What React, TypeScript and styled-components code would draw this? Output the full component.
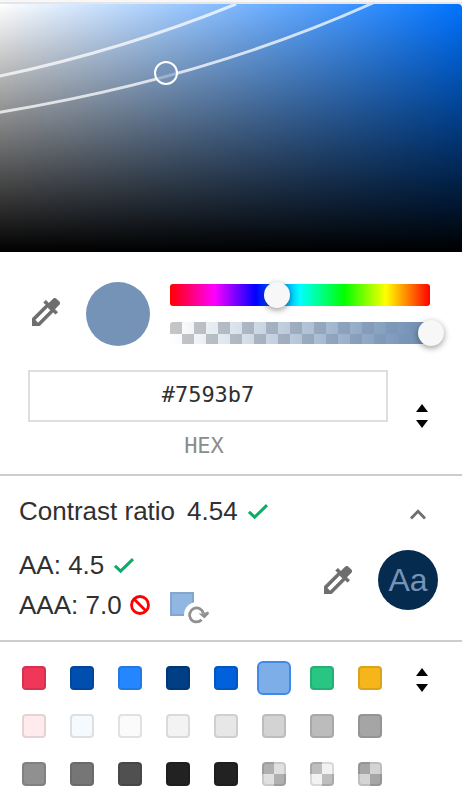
import React, { useState } from "react";
import styled, { createGlobalStyle, css } from "styled-components";

const GlobalStyle = createGlobalStyle`
  *, *::before, *::after { box-sizing: border-box; }
  body { margin: 0; background: #fff; }
  button, input { font: inherit; color: inherit; margin: 0; padding: 0; }
`;

const checker = (a: string, b: string, size: number) =>
  css`repeating-conic-gradient(${a} 0% 25%, ${b} 0% 50%) 0 0 / ${size}px ${size}px`;

const Picker = styled.main`
  border-top: 2px solid #f7f7f7;
  background: #fff;
  color: #303030;
  font-family: "Liberation Sans", Arial, sans-serif;
  font-size: 26px;
  line-height: 40px;
`;

const Spectrum = styled.section`
  position: relative;
  height: 250px;
  border-top: 2px solid #e6e6e6;
  background: #fff;
`;

const SpectrumFill = styled.div`
  height: 100%;
  border-radius: 4px 4px 0 0;
  overflow: hidden;
  background:
    linear-gradient(to top, #000, transparent),
    linear-gradient(to right, #fff, transparent),
    #0073ff;
`;

const Curves = styled.svg`
  display: block;
  width: 100%;
  height: 100%;
`;

const SpectrumHandle = styled.button`
  position: absolute;
  left: 36%;
  top: 28%;
  width: 24px;
  height: 24px;
  transform: translate(-50%, -50%);
  border: 2px solid #fff;
  border-radius: 50%;
  background: rgba(117, 147, 183, 0.6);
`;

const Controls = styled.section`
  display: grid;
  grid-template-columns: 30px 64px 1fr;
  align-items: center;
  column-gap: 26px;
  padding: 30px 32px 0 30px;
`;

const IconButton = styled.button`
  display: inline-flex;
  align-items: center;
  justify-content: center;
  border: 0;
  background: none;
  color: #6e6e6e;
`;

const PickButton = styled(IconButton)`
  justify-content: flex-end;
  padding-bottom: 4px;
`;

const ColorDisc = styled.div`
  width: 64px;
  height: 64px;
  border-radius: 50%;
  background: #7593b7;
`;

const Sliders = styled.div`
  display: flex;
  flex-direction: column;
  gap: 16px;
  margin-left: -6px;
`;

const Track = styled.div<{ $kind: "hue" | "alpha" }>`
  display: flex;
  height: 22px;
  border-radius: 3px;
  background: ${(p) =>
    p.$kind === "hue"
      ? "linear-gradient(to right, #f00, #f0f 17%, #00f 33%, #0ff 50%, #0f0 67%, #ff0 83%, #f00)"
      : css`linear-gradient(to right, transparent, #7593b7 94%), ${checker("#fff", "#c6c6c6", 24)}`};
`;

const Range = styled.input`
  appearance: none;
  flex: 1;
  min-width: 0;
  height: 22px;
  margin: 0 -14px 0 -13px;
  background: transparent;
  &::-webkit-slider-thumb {
    appearance: none;
    width: 26px;
    height: 26px;
    border-radius: 50%;
    background: #f7f7f7;
    box-shadow: 0 2px 6px rgba(0, 0, 0, 0.4);
  }
`;

const ValueRow = styled.section`
  display: grid;
  grid-template-columns: 1fr 24px;
  align-items: center;
  column-gap: 22px;
  padding: 24px 28px 8px;
  font-family: "DejaVu Sans Mono", monospace;
  font-size: 22px;
`;

const HexField = styled.label`
  display: flex;
  flex-direction: column;
  gap: 4px;
  color: #8c8c8c;
  text-align: center;
`;

const HexCaption = styled.span`
  padding-right: 8px;
`;

const HexInput = styled.input`
  width: 100%;
  height: 52px;
  padding-bottom: 4px;
  border: 2px solid #dedede;
  background: #fff;
  color: #303030;
  text-align: center;
`;

const FormatButton = styled(IconButton)`
  padding-bottom: 4px;
`;

const Contrast = styled.section`
  border-top: 2px solid #cdcdcd;
  border-bottom: 2px solid #cdcdcd;
  padding: 15px 24px 15px 19px;
`;

const Row = styled.div<{ $gap?: number }>`
  display: flex;
  align-items: center;
  gap: ${(p) => p.$gap ?? 10}px;
`;

const Summary = styled(Row)`
  justify-content: space-between;
  margin-bottom: 14px;
`;

const Details = styled.div`
  display: flex;
  align-items: flex-start;
  justify-content: space-between;
`;

const Tools = styled(Row)`
  padding-top: 5px;
`;

const Toggle = styled(IconButton)`
  width: 40px;
  height: 40px;
  padding-top: 6px;
`;

const Preview = styled.div`
  display: flex;
  align-items: center;
  justify-content: center;
  width: 60px;
  height: 60px;
  border-radius: 50%;
  background: #052b4e;
  color: #7593b7;
  font-size: 32px;
`;

const Suggestion = styled(IconButton)`
  margin-left: 12px;
`;

const Palette = styled.section`
  display: grid;
  grid-template-columns: 1fr 24px;
  align-items: start;
  column-gap: 16px;
  padding: 12px 28px 0 10px;
`;

const Swatches = styled.div`
  display: grid;
  grid-template-columns: repeat(8, 1fr);
`;

const SwatchCell = styled.div`
  display: flex;
  align-items: center;
  justify-content: center;
  height: 48px;
`;

const StepperCell = styled(SwatchCell)`
  height: 52px;
`;

const Swatch = styled.button<{ $color: string; $alpha?: boolean; $selected?: boolean }>`
  width: ${(p) => (p.$selected ? 34 : 24)}px;
  height: ${(p) => (p.$selected ? 34 : 24)}px;
  border: ${(p) => (p.$selected ? "2px solid #3f88ec" : "2px solid rgba(0, 0, 0, 0.1)")};
  border-radius: ${(p) => (p.$selected ? 6 : 4)}px;
  background: ${(p) =>
    p.$alpha
      ? css`linear-gradient(${p.$color}, ${p.$color}), repeating-conic-gradient(#fff 0% 25%, #c8c8c8 0% 50%) border-box`
      : p.$color};
`;

const Eyedropper = () => (
  <svg width="28" height="28" viewBox="3 3 18 18" aria-hidden="true">
    <path
      fill="currentColor"
      stroke="currentColor"
      strokeWidth="0.4"
      d="M20.71 5.63l-2.34-2.34c-.39-.39-1.02-.39-1.41 0l-3.12 3.12-1.93-1.91-1.41 1.41 1.42 1.42L3 16.25V21h4.75l8.92-8.92 1.42 1.42 1.41-1.41-1.92-1.92 3.12-3.12c.4-.4.4-1.03.01-1.42zM6.92 19L5 17.08l8.06-8.06 1.92 1.92L6.92 19z"
    />
  </svg>
);

const Check = () => (
  <svg width="20" height="18" viewBox="0 0 20 18" role="img" aria-label="Passes">
    <path d="M1 9.8 6.6 15.2 19 3.2" fill="none" stroke="#0cab69" strokeWidth="3" />
  </svg>
);

const Prohibited = () => (
  <svg width="20" height="20" viewBox="0 0 20 20" role="img" aria-label="Fails">
    <g fill="none" stroke="#f00" strokeWidth="2.8">
      <circle cx="10" cy="10" r="8.5" />
      <path d="M4 4 16 16" />
    </g>
  </svg>
);

const Refresh = () => (
  <svg width="40" height="38" viewBox="0 0 40 38" aria-hidden="true">
    <rect x="1" y="7" width="22" height="22" fill="#92b6e2" stroke="#84a5ce" strokeWidth="2" />
    <circle cx="27" cy="29" r="13" fill="#fff" />
    <path d="M31.6 33.8A7 7 0 1 1 33.4 27.5" fill="none" stroke="#909090" strokeWidth="2.8" />
    <path d="M28.6 27.6H33L38 25.4 39.2 27.4 34.4 32.6Z" fill="#909090" />
  </svg>
);

const ChevronUp = () => (
  <svg width="16" height="11" viewBox="0 0 16 11" aria-hidden="true">
    <path d="M1 9.5 8 2.3 15 9.5" fill="none" stroke="#6e6e6e" strokeWidth="2.8" />
  </svg>
);

const Arrows = () => (
  <svg width="12" height="24" viewBox="0 0 12 24" aria-hidden="true">
    <path d="M6 0 12 8H0ZM0 16H12L6 24Z" fill="#000" />
  </svg>
);

type SwatchItem = { color: string; alpha?: boolean };

const swatches: SwatchItem[] = [
  { color: "#ef3859" }, { color: "#004fae" }, { color: "#2587ff" }, { color: "#003e86" },
  { color: "#0061da" }, { color: "#7eaee8" }, { color: "#29c683" }, { color: "#f5b51b" },
  { color: "#ffebed" }, { color: "#f5faff" }, { color: "#fbfbfb" }, { color: "#f3f3f3" },
  { color: "#e7e7e7" }, { color: "#d3d3d3" }, { color: "#bcbcbc" }, { color: "#a5a5a5" },
  { color: "#909090" }, { color: "#767676" }, { color: "#505050" }, { color: "#222222" },
  { color: "#222222" },
  { color: "rgba(0, 0, 0, 0.12)", alpha: true },
  { color: "rgba(0, 0, 0, 0.05)", alpha: true },
  { color: "rgba(0, 0, 0, 0.17)", alpha: true },
];

export default function App() {
  const [hex, setHex] = useState("#7593b7");
  const [selected, setSelected] = useState(5);

  return (
    <>
      <GlobalStyle />
      <Picker>
        <Spectrum>
          <SpectrumFill>
            <Curves viewBox="0 0 462 248" preserveAspectRatio="none" aria-hidden="true">
              <g fill="none" stroke="#fff" strokeOpacity="0.75" strokeWidth="3">
                <path d="M-2 72.500C80 55 160 31 236 0" />
                <path d="M-2 108.500C130 87 255 52 373 -1" />
              </g>
            </Curves>
          </SpectrumFill>
          <SpectrumHandle aria-label="Saturation and brightness" />
        </Spectrum>

        <Controls>
          <PickButton aria-label="Pick color">
            <Eyedropper />
          </PickButton>
          <ColorDisc />
          <Sliders>
            <Track $kind="hue">
              <Range type="range" aria-label="Hue" min={0} max={100} defaultValue={41} />
            </Track>
            <Track $kind="alpha">
              <Range type="range" aria-label="Alpha" min={0} max={100} defaultValue={100} />
            </Track>
          </Sliders>
        </Controls>

        <ValueRow>
          <HexField>
            <HexInput value={hex} onChange={(e) => setHex(e.target.value)} />
            <HexCaption>HEX</HexCaption>
          </HexField>
          <FormatButton aria-label="Change color format">
            <Arrows />
          </FormatButton>
        </ValueRow>

        <Contrast>
          <Summary>
            <Row>
              <Row $gap={12}>
                <span>Contrast ratio</span>
                <span>4.54</span>
              </Row>
              <Check />
            </Row>
            <Toggle aria-label="Collapse contrast details">
              <ChevronUp />
            </Toggle>
          </Summary>
          <Details>
            <div>
              <Row>
                <span>AA: 4.5</span>
                <Check />
              </Row>
              <Row $gap={8}>
                <span>AAA: 7.0</span>
                <Prohibited />
                <Suggestion aria-label="Use suggested color">
                  <Refresh />
                </Suggestion>
              </Row>
            </div>
            <Tools $gap={26}>
              <IconButton aria-label="Pick background color">
                <Eyedropper />
              </IconButton>
              <Preview>Aa</Preview>
            </Tools>
          </Details>
        </Contrast>

        <Palette>
          <Swatches>
            {swatches.map((s, i) => (
              <SwatchCell key={i}>
                <Swatch
                  $color={s.color}
                  $alpha={s.alpha}
                  $selected={selected === i}
                  aria-label={`Swatch ${i + 1}`}
                  onClick={() => setSelected(i)}
                />
              </SwatchCell>
            ))}
          </Swatches>
          <StepperCell>
            <IconButton aria-label="Change palette">
              <Arrows />
            </IconButton>
          </StepperCell>
        </Palette>
      </Picker>
    </>
  );
}
